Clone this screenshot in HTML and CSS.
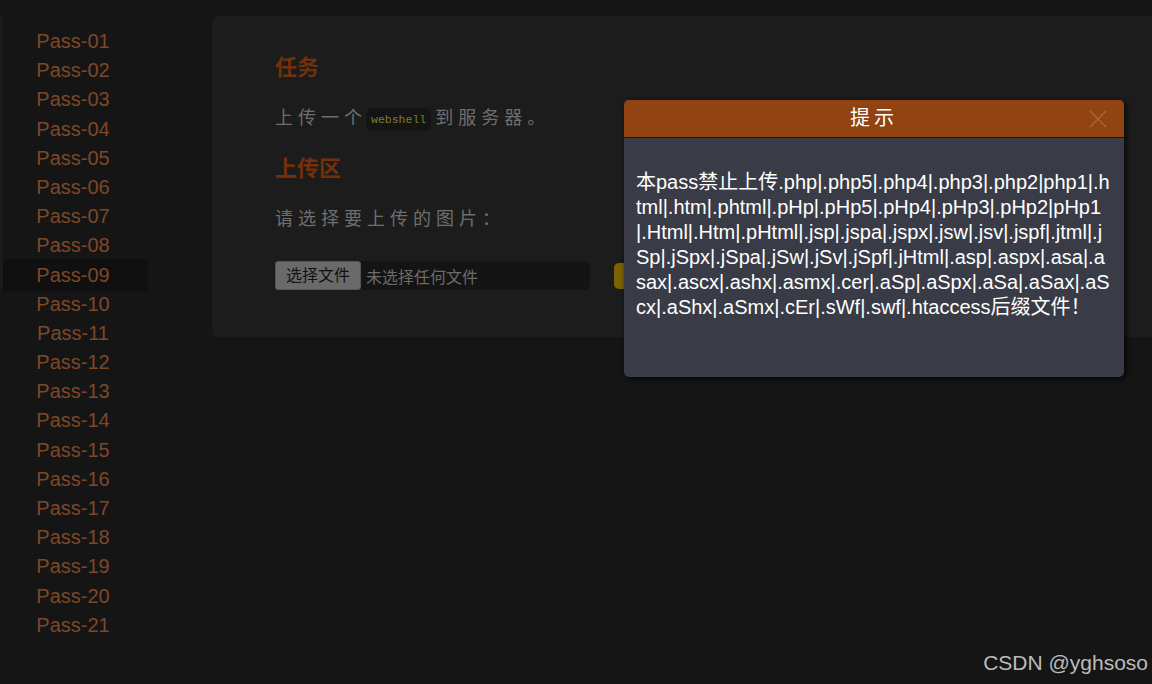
FILE: index.html
```html
<!DOCTYPE html>
<html lang="zh-CN">
<head>
    <meta charset="UTF-8">
    <meta name="viewport" content="width=device-width, initial-scale=1.0">
    <title>upload-labs</title>
    <link rel="stylesheet" href="styles.css">
</head>
<body>

    <div class="page">
        <div class="edge"></div>

        <!-- menu de niveis -->
        <ul class="menu">
            <li>Pass-01</li>
            <li>Pass-02</li>
            <li>Pass-03</li>
            <li>Pass-04</li>
            <li>Pass-05</li>
            <li>Pass-06</li>
            <li>Pass-07</li>
            <li>Pass-08</li>
            <li class="active">Pass-09</li>
            <li>Pass-10</li>
            <li>Pass-11</li>
            <li>Pass-12</li>
            <li>Pass-13</li>
            <li>Pass-14</li>
            <li>Pass-15</li>
            <li>Pass-16</li>
            <li>Pass-17</li>
            <li>Pass-18</li>
            <li>Pass-19</li>
            <li>Pass-20</li>
            <li>Pass-21</li>
        </ul>

        <div class="panel">
            <h3>任务</h3>
            <p class="text">上传一个<code>webshell</code>到服务器。</p>

            <h3>上传区</h3>
            <p class="text">请选择要上传的图片：</p>

            <div class="upload-row">
                <div class="file-box">
                    <span class="file-btn">选择文件</span>
                    <span class="file-name">未选择任何文件</span>
                </div>
                <span class="btn-upload">上传</span>
            </div>
        </div>
    </div>

    <!-- janela de aviso -->
    <div class="dialog">
        <div class="dialog-title">
            提示
            <svg class="dialog-close" width="18" height="18" viewBox="0 0 18 18">
                <path d="M1 1 L17 17 M17 1 L1 17" stroke="#b0673a" stroke-width="1.2" fill="none"/>
            </svg>
        </div>
        <div class="dialog-body">本pass禁止上传.php|.php5|.php4|.php3|.php2|php1|.h<br>tml|.htm|.phtml|.pHp|.pHp5|.pHp4|.pHp3|.pHp2|pHp1<br>|.Html|.Htm|.pHtml|.jsp|.jspa|.jspx|.jsw|.jsv|.jspf|.jtml|.j<br>Sp|.jSpx|.jSpa|.jSw|.jSv|.jSpf|.jHtml|.asp|.aspx|.asa|.a<br>sax|.ascx|.ashx|.asmx|.cer|.aSp|.aSpx|.aSa|.aSax|.aS<br>cx|.aShx|.aSmx|.cEr|.sWf|.swf|.htaccess后缀文件！</div>
    </div>

    <div class="watermark">CSDN @yghsoso</div>

</body>
</html>
```

FILE: styles.css
```css
body {
    margin: 0;
    padding: 0;
    background: #151515;
    font-family: 'Liberation Sans', Arial, 'Noto Sans CJK SC', sans-serif;
    height: 684px;
    overflow: hidden;
}

.page {
    display: flex;
    align-items: flex-start;
    padding-top: 16px;
}

.edge {
    width: 3px;
    height: 274px;
    background: #1b1b1b;
    flex-shrink: 0;
}

.menu {
    list-style: none;
    margin: 0;
    padding: 11px 0 0 0;
    width: 209px;
    flex-shrink: 0;
}

.menu li {
    width: 140px;
    padding-right: 5px;
    height: 29.2px;
    line-height: 29.2px;
    font-size: 20px;
    text-align: center;
    color: #7e4727;
}

.menu li.active {
    background: #101010;
    border-radius: 0 5px 5px 0;
    margin: -2px 0;
    padding-top: 2px;
    padding-bottom: 2px;
}

.panel {
    flex: 1;
    height: 321px;
    box-sizing: border-box;
    background: #1c1c1c;
    border-radius: 6px 0 0 6px;
    padding: 38px 0 0 63px;
}

.panel h3 {
    margin: 0;
    font-size: 22px;
    line-height: 28px;
    font-weight: bold;
    color: #74300a;
}

.text {
    margin: 22px 0 21px;
    font-size: 18px;
    line-height: 28px;
    letter-spacing: 5px;
    color: #6e6e6e;
}

.text code {
    font-family: 'Liberation Mono', 'DejaVu Sans Mono', monospace;
    font-size: 11.5px;
    letter-spacing: 0;
    color: #7f7d2c;
    background: #141414;
    border-radius: 6px;
    padding: 5px 5px;
    margin: 0 4px 0 -1px;
    vertical-align: 1px;
}

.upload-row {
    display: flex;
    align-items: center;
    margin-top: 28px;
}

.file-box {
    display: flex;
    align-items: center;
    width: 315px;
    height: 29px;
    background: #141414;
    border-radius: 5px;
}

.file-btn {
    display: inline-block;
    box-sizing: border-box;
    width: 86px;
    height: 29px;
    line-height: 27px;
    text-align: center;
    background: #6a6a6a;
    border: 1px solid #555;
    border-radius: 3px;
    color: #111;
    font-size: 16px;
}

.file-name {
    margin-left: 5px;
    font-size: 16px;
    color: #6b6b6b;
}

.btn-upload {
    display: inline-block;
    margin-left: 24px;
    padding: 0 14px;
    height: 26px;
    line-height: 26px;
    background: #7d6400;
    border-radius: 5px;
    color: #111;
    font-size: 15px;
}

.dialog {
    position: absolute;
    left: 624px;
    top: 100px;
    width: 500px;
    height: 277px;
    background: #393c47;
    border-radius: 5px;
    box-shadow: 2px 2px 6px rgba(0, 0, 0, 0.8);
    overflow: hidden;
}

.dialog-title {
    position: relative;
    height: 37px;
    line-height: 37px;
    background: #914411;
    border-bottom: 1px solid #151515;
    text-align: center;
    color: #fff;
    font-size: 20px;
    letter-spacing: 4px;
}

.dialog-close {
    position: absolute;
    right: 17px;
    top: 10px;
}

.dialog-body {
    padding: 32px 12px 0;
    font-size: 20px;
    line-height: 25px;
    color: #fff;
    white-space: nowrap;
}

.watermark {
    position: absolute;
    right: 4px;
    bottom: 9px;
    font-size: 21px;
    color: #bcbcbc;
}
```
